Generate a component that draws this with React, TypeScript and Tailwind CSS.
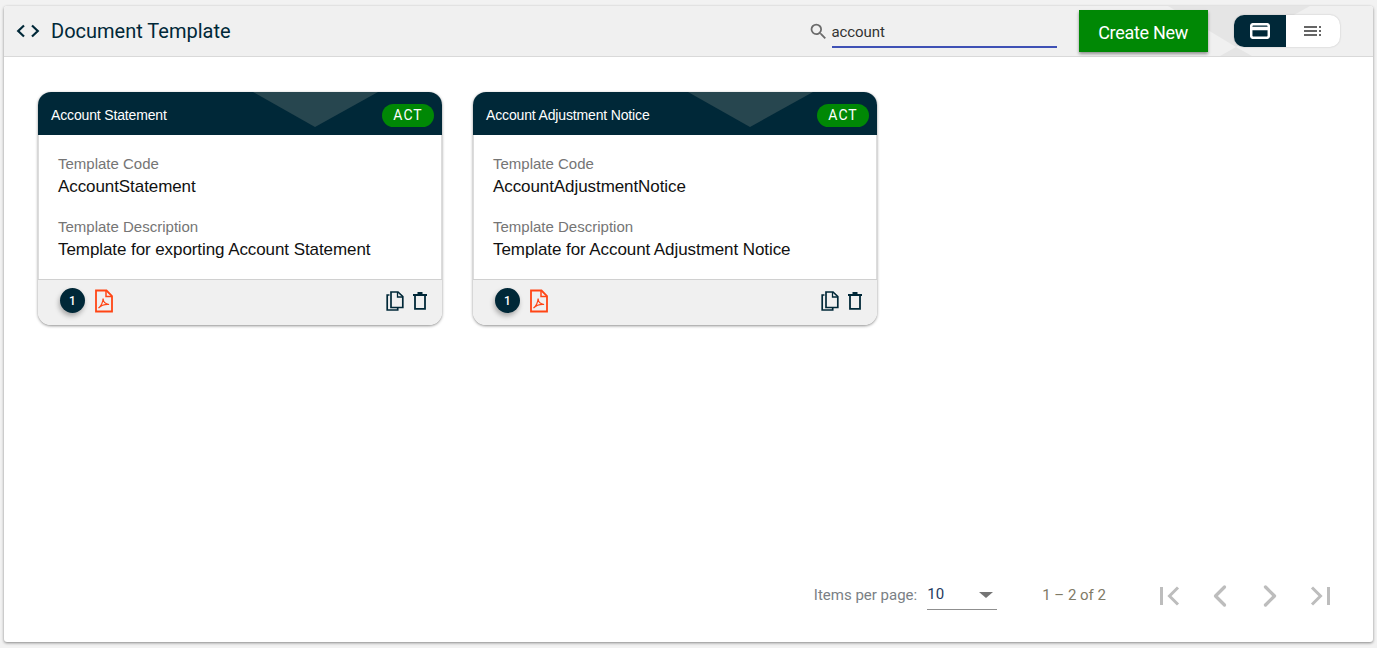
import { ChevronLeft, ChevronRight } from 'lucide-react';

const templates = [
    { title: 'Account Statement', code: 'AccountStatement', description: 'Template for exporting Account Statement' },
    { title: 'Account Adjustment Notice', code: 'AccountAdjustmentNotice', description: 'Template for Account Adjustment Notice' },
];

const PdfIcon = () => (
    <svg width="18" height="24" viewBox="0 0 18 24" fill="none" stroke="#ff4514" strokeWidth="1.800">
        <path d="M1 1.500h10.500l5.500 5.500v15.500H1z" />
        <path d="M11 1.500v6h6" strokeWidth="1.500" />
        <path d="M3.500 19c2.500-1.500 4.500-6 4.600-9.500.1 3 2.500 5.500 6 6-3.500-.3-8 1-10.600 3.500z" strokeWidth="1.200" />
    </svg>
);

const CopyIcon = () => (
    <svg width="18" height="20" viewBox="0 0 18 20" fill="none" stroke="#002838" strokeWidth="1.700">
        <path d="M3.500 4H1.200v15h10.500v-2.400" />
        <path d="M5 1h7l4.800 4.500V16.500H5z" fill="#f0f0f0" />
        <path d="M11.500 1v5h5.300" strokeWidth="1.300" />
    </svg>
);

const TrashIcon = () => (
    <svg width="14" height="18" viewBox="0 0 14 18" fill="none" stroke="#002838" strokeWidth="1.800">
        <path d="M0 3h14" />
        <path d="M4.500 1h5" />
        <path d="M2 4v12.800h10V4" />
    </svg>
);

const TemplateCard = ({ title, code, description }: { title: string; code: string; description: string }) => {
    return (
        <div className="w-[404px] h-[233px] flex flex-col rounded-[13px] bg-white shadow-[0_1px_3px_rgba(0,0,0,0.45)] overflow-hidden">
            <div className="relative h-[43px] flex items-center justify-between bg-[#002838] pl-[13px] pr-[8px] pt-[4px]">
                <svg className="absolute left-[215px] top-0" width="125" height="35" viewBox="0 0 125 35">
                    <polygon points="0,0 125,0 62,35" fill="#27464f" />
                </svg>
                <span className="relative text-[14px] tracking-[-0.15px] text-white font-['Liberation_Sans',sans-serif]">{title}</span>
                <span className="relative w-[52px] h-[23px] flex items-center justify-center rounded-full bg-[#008805] text-[14px] tracking-[1px] text-white">ACT</span>
            </div>
            <div className="flex-1 pl-[19px] pt-[20px] font-['Liberation_Sans',sans-serif] border-x border-[#dcdcdc]">
                <div className="text-[15px] leading-[18px] text-[#757575]">Template Code</div>
                <div className="mt-[2px] text-[17px] leading-[24px] tracking-[-0.08px] text-[#111]">{code}</div>
                <div className="mt-[19px] text-[15px] leading-[18px] text-[#757575]">Template Description</div>
                <div className="mt-[2px] text-[17px] leading-[24px] tracking-[-0.08px] text-[#111]">{description}</div>
            </div>
            <div className="h-[46px] flex items-center justify-between border-t border-[#d0d0d0] bg-[#f0f0f0] pl-[22px] pr-[15px] pb-[4px]">
                <div className="flex items-center gap-[10px]">
                    <span className="w-[25px] h-[25px] flex items-center justify-center rounded-full bg-[#002838] text-[12px] font-medium text-white shadow-[-1px_3px_5px_rgba(0,0,0,0.3)]">1</span>
                    <PdfIcon />
                </div>
                <div className="flex items-center gap-[9px]">
                    <CopyIcon />
                    <TrashIcon />
                </div>
            </div>
        </div>
    );
};

export default function App() {
    return (
        <div className="h-[648px] bg-[#f2f2f2] pl-[4px] pr-[4px] pt-[6px] pb-[6px] font-['Roboto',sans-serif]">
            <div className="h-full flex flex-col bg-white rounded-[3px] shadow-[0_1px_3px_rgba(0,0,0,0.45)] overflow-hidden">
                <header className="relative h-[51px] shrink-0 flex items-center border-b border-[#d9d9d9] bg-[#f0f0f0] pl-[12px]">
                    <svg className="absolute left-[1164px] top-0" width="142" height="50" viewBox="0 0 142 50">
                        <polygon points="0,0 142,0 68,41" fill="#e5e5e5" />
                        <polygon points="52,50 68,41 84,50" fill="#e5e5e5" />
                    </svg>
                    <svg width="24" height="16" viewBox="0 0 24 16" fill="none" stroke="#002838" strokeWidth="2.200">
                        <path d="M8 2.500 2.200 8 8 13.500" />
                        <path d="M16 2.500 21.800 8 16 13.500" />
                    </svg>
                    <h1 className="relative ml-[11px] text-[20px] font-normal text-[#002838]">Document Template</h1>
                    <div className="relative ml-[577px] flex items-center">
                        <svg width="21" height="21" viewBox="0 0 24 24" fill="#6b6b6b">
                            <path d="M15.500 14h-.79l-.28-.27A6.470 6.470 0 0 0 16 9.500 6.500 6.500 0 1 0 9.500 16c1.610 0 3.090-.59 4.230-1.570l.27.28v.79l5 4.990L20.490 19l-4.990-5zm-6 0C7.010 14 5 11.990 5 9.500S7.010 5 9.500 5 14 7.010 14 9.500 11.990 14 9.500 14z" />
                        </svg>
                        <div className="ml-[3px] mt-[1px] w-[225px] h-[33px] flex items-center border-b-2 border-[#3f51b5] pt-[3px] text-[15px] tracking-[-0.1px] text-[#333]">account</div>
                    </div>
                    <button className="relative ml-[22px] w-[129px] h-[42px] bg-[#008805] pt-[2px] text-[18px] tracking-[-0.3px] text-white shadow-[0_2px_3px_rgba(0,0,0,0.4)]">Create New</button>
                    <div className="relative ml-[26px] w-[106px] h-[32px] flex rounded-[10px] bg-white shadow-[0_0_2px_rgba(0,0,0,0.2)] overflow-hidden">
                        <div className="w-[52px] flex items-center justify-center bg-[#002838]">
                            <svg width="20" height="16" viewBox="0 0 20 16" fill="none" stroke="#fff" strokeWidth="2.500">
                                <rect x="1.200" y="1.200" width="17.600" height="13.600" rx="2" />
                                <path d="M1 5.500h18" strokeWidth="3.500" />
                            </svg>
                        </div>
                        <div className="flex-1 flex items-center justify-center">
                            <svg width="18" height="12" viewBox="0 0 18 12" fill="none" stroke="#333" strokeWidth="1.500">
                                <path d="M0 2h13M0 6h13M0 10h13" />
                                <path d="M15 2h2M15 6h2M15 10h2" />
                            </svg>
                        </div>
                    </div>
                </header>
                <main className="flex-1 flex flex-col">
                    <div className="flex-1 flex items-start gap-[31px] pl-[34px] pt-[35px]">
                        {templates.map((template) => (
                            <TemplateCard key={template.code} {...template} />
                        ))}
                    </div>
                    <div className="h-[65px] flex items-start justify-end pr-[35px] text-[#757575]">
                        <span className="mt-[8px] text-[15px] leading-[20px] text-[#7a7f85]">Items per page:</span>
                        <div className="ml-[10px] mt-[3px] w-[70px] h-[30px] flex items-center justify-between border-b border-[#8f8f8f] pr-[4px]">
                            <span className="text-[15px] text-[#1f3a5f]">10</span>
                            <span className="w-0 h-0 border-x-[7px] border-x-transparent border-t-[6px] border-t-[#757575]" />
                        </div>
                        <span className="ml-[45px] mt-[8px] text-[15px] leading-[20px] text-[#7f7a66]">1 – 2 of 2</span>
                        <div className="ml-[46px] mt-[1px] flex items-center gap-[14px] text-[#bdbdbd]">
                            <svg width="36" height="36" viewBox="0 0 36 36" fill="none" stroke="currentColor" strokeWidth="3">
                                <path d="M9.500 9v18" />
                                <path d="M26 9.500 17.500 18 26 26.500" />
                            </svg>
                            <ChevronLeft size={36} strokeWidth={2.200} />
                            <ChevronRight size={36} strokeWidth={2.200} />
                            <svg width="36" height="36" viewBox="0 0 36 36" fill="none" stroke="currentColor" strokeWidth="3">
                                <path d="M26.500 9v18" />
                                <path d="M10 9.500 18.500 18 10 26.500" />
                            </svg>
                        </div>
                    </div>
                </main>
            </div>
        </div>
    );
}
